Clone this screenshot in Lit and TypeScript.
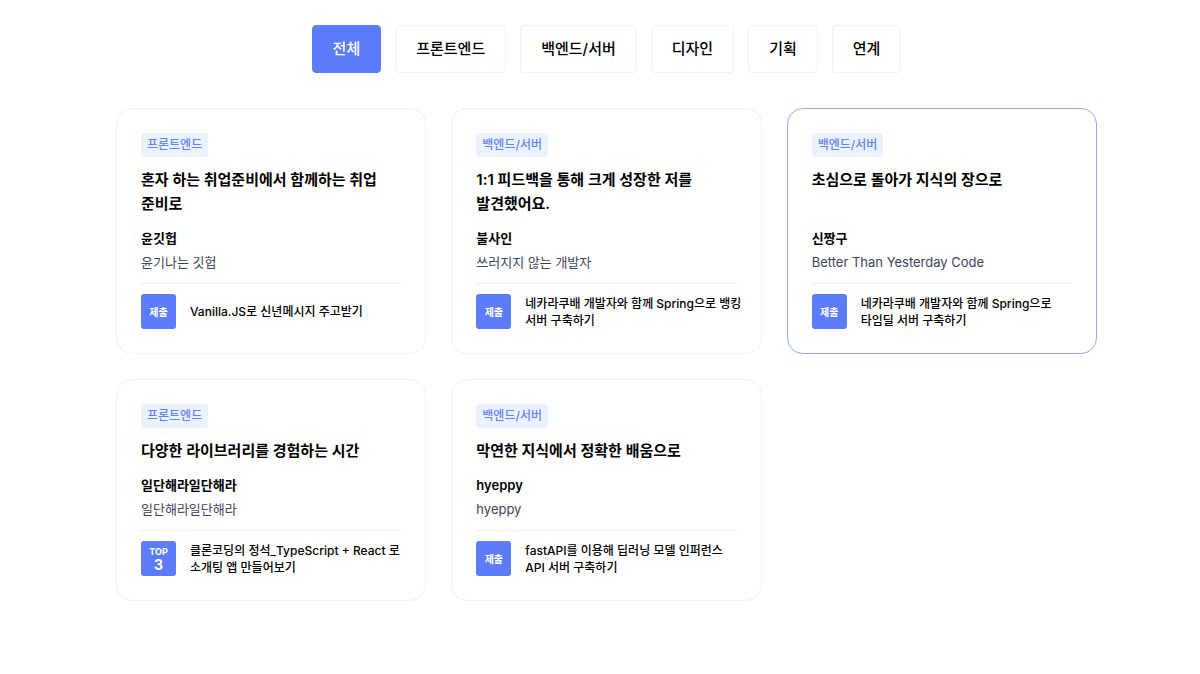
import { LitElement, html, css } from "lit";
import { customElement, property, state } from "lit/decorators.js";
import { classMap } from "lit/directives/class-map.js";

interface Review {
  field: string;
  title: string;
  name: string;
  bio: string;
  project: string;
  rank?: number;
  featured?: boolean;
}

const ALL = "전체";
const FIELDS = [ALL, "프론트엔드", "백엔드/서버", "디자인", "기획", "연계"];

const REVIEWS: Review[] = [
  {
    field: "프론트엔드",
    title: "혼자 하는 취업준비에서 함께하는 취업 준비로",
    name: "윤깃헙",
    bio: "윤기나는 깃헙",
    project: "Vanilla.JS로 신년메시지 주고받기",
  },
  {
    field: "백엔드/서버",
    title: "1:1 피드백을 통해 크게 성장한 저를 발견했어요.",
    name: "불사인",
    bio: "쓰러지지 않는 개발자",
    project: "네카라쿠배 개발자와 함께 Spring으로 뱅킹 서버 구축하기",
  },
  {
    field: "백엔드/서버",
    title: "초심으로 돌아가 지식의 장으로",
    name: "신짱구",
    bio: "Better Than Yesterday Code",
    project: "네카라쿠배 개발자와 함께 Spring으로 타임딜 서버 구축하기",
    featured: true,
  },
  {
    field: "프론트엔드",
    title: "다양한 라이브러리를 경험하는 시간",
    name: "일단해라일단해라",
    bio: "일단해라일단해라",
    project: "클론코딩의 정석_TypeScript + React 로 소개팅 앱 만들어보기",
    rank: 3,
  },
  {
    field: "백엔드/서버",
    title: "막연한 지식에서 정확한 배움으로",
    name: "hyeppy",
    bio: "hyeppy",
    project: "fastAPI를 이용해 딥러닝 모델 인퍼런스 API 서버 구축하기",
  },
];

@customElement("review-card")
export class ReviewCard extends LitElement {
  @property({ attribute: false }) review!: Review;

  static styles = css`
    :host {
      display: flex;
      min-width: 0;
    }
    .card {
      flex: 1;
      min-width: 0;
      box-sizing: border-box;
      display: flex;
      flex-direction: column;
      padding: 24px;
      border: 1px solid #f1f1f3;
      border-radius: 16px;
      background: #fff;
      word-break: keep-all;
    }
    .featured {
      border-color: #94a9ee;
    }
    .tag {
      align-self: flex-start;
      padding: 0 6px;
      border-radius: 3px;
      background: #ebf2ff;
      color: #6583f0;
      font-size: 12px;
      font-weight: 500;
      line-height: 24px;
    }
    .title {
      flex: 1;
      margin: 11px 0 10px;
      font-size: 15px;
      font-weight: 600;
      line-height: 24px;
    }
    .name,
    .bio {
      margin: 0;
      font-size: 13px;
      line-height: 24px;
    }
    .name {
      font-weight: 600;
    }
    .bio {
      color: #3b4557;
    }
    .project {
      display: flex;
      align-items: center;
      gap: 14px;
      margin-top: 9px;
      padding-top: 10px;
      border-top: 1px solid #efeff1;
    }
    .badge {
      flex: none;
      display: flex;
      flex-direction: column;
      align-items: center;
      justify-content: center;
      width: 35px;
      height: 35px;
      border-radius: 3px;
      background: #5c7cfa;
      color: #fff;
      font-size: 10px;
      font-weight: 700;
      line-height: 14px;
    }
    .top {
      font-size: 9px;
      line-height: 12px;
    }
    .rank {
      font-size: 14px;
      line-height: 14px;
    }
    .text {
      margin: 0 -8px 0 0;
      font-size: 12px;
      font-weight: 500;
      line-height: 17px;
    }
  `;

  render() {
    const r = this.review;
    return html`
      <article class=${classMap({ card: true, featured: !!r.featured })}>
        <span class="tag">${r.field}</span>
        <h3 class="title">${r.title}</h3>
        <p class="name">${r.name}</p>
        <p class="bio">${r.bio}</p>
        <div class="project">
          <div class="badge">
            ${r.rank
              ? html`<span class="top">TOP</span><span class="rank">${r.rank}</span>`
              : html`<span>제출</span>`}
          </div>
          <p class="text">${r.project}</p>
        </div>
      </article>
    `;
  }
}

@customElement("app-root")
export class AppRoot extends LitElement {
  @state() private selected = ALL;

  static styles = css`
    :host {
      display: block;
      padding: 25px 103px 25px 116px;
      background: #fff;
      color: #000;
      font-family: Inter, "Noto Sans CJK KR", sans-serif;
    }
    .tabs {
      display: flex;
      flex-wrap: wrap;
      justify-content: center;
      gap: 14px;
      margin-bottom: 35px;
    }
    .tab {
      height: 48px;
      padding: 0 20px;
      border: 1px solid #f1f1f3;
      border-radius: 4px;
      background: #fff;
      color: #000;
      font-family: inherit;
      font-size: 15px;
      font-weight: 500;
      line-height: 24px;
      cursor: pointer;
    }
    .active {
      border-color: #5c7cfa;
      background: #5c7cfa;
      color: #fff;
    }
    .cards {
      display: grid;
      grid-template-columns: repeat(3, minmax(0, 1fr));
      gap: 25px;
    }
  `;

  render() {
    const shown = REVIEWS.filter((r) => this.selected === ALL || r.field === this.selected);
    return html`
      <nav class="tabs">
        ${FIELDS.map(
          (field) => html`<button
            type="button"
            class=${classMap({ tab: true, active: field === this.selected })}
            aria-pressed=${field === this.selected}
            @click=${() => (this.selected = field)}
          >${field}</button>`
        )}
      </nav>
      <main class="cards">
        ${shown.map((r) => html`<review-card .review=${r}></review-card>`)}
      </main>
    `;
  }
}
